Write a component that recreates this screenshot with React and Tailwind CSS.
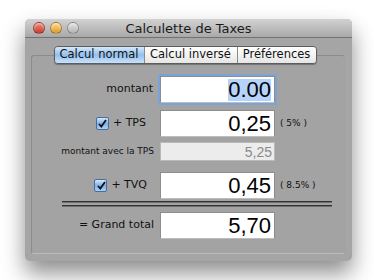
import React from "react";

const label = "font-['DejaVu_Sans',sans-serif] text-[#111]";
const num = "font-['Liberation_Sans',Arial,sans-serif]";

function Light({ color }) {
  return (
    <div
      className={`h-[12px] w-[12px] rounded-full border border-black/30 shadow-[inset_0_1px_2px_rgba(255,255,255,0.6)] ${color}`}
    />
  );
}

function Check() {
  return (
    <div className="flex h-[13px] w-[13px] items-center justify-center rounded-[2px] border border-[#4a6c9a] bg-gradient-to-b from-[#d6e8fb] via-[#7fb0e6] to-[#aad0f6]">
      <svg width="10" height="10" viewBox="0 0 10 10">
        <path d="M2 5 L4.3 7.6 L9 1" fill="none" stroke="#111" strokeWidth="1.8" />
      </svg>
    </div>
  );
}

function Field({ value, focus }) {
  return (
    <div
      className={`flex h-[27px] w-[115px] items-center justify-end border border-[#8d8d8d] border-b-[#bdbdbd] bg-white pr-[3px] ${
        focus ? "ring-2 ring-[#7aa3d8]" : ""
      }`}
    >
      <span
        className={`${num} text-[22px] leading-none text-black ${
          focus ? "bg-[#b6d4fb]" : ""
        }`}
      >
        {value}
      </span>
    </div>
  );
}

export default function App() {
  return (
    <div className="h-[280px] w-[374px] overflow-hidden bg-white pl-[25px] pt-[19px]">
      <div className="flex h-[242px] w-[327px] flex-col overflow-hidden rounded-[5px] bg-[#a5a5a5] shadow-[0_12px_22px_rgba(0,0,0,0.45)]">
        {/* title bar */}
        <div className="relative flex h-[19px] items-center border-b border-[#727272] bg-gradient-to-b from-[#d2d2d2] to-[#a9a9a9] pl-[8px]">
          <div className="flex gap-[5px]">
            <Light color="bg-gradient-to-b from-[#f08a7c] to-[#c8382a]" />
            <Light color="bg-gradient-to-b from-[#fbd98b] to-[#e39a1c]" />
            <Light color="bg-gradient-to-b from-[#e2e2e2] to-[#b4b4b4]" />
          </div>
          <div className="absolute inset-0 flex items-center justify-center pt-[1px] font-['DejaVu_Sans',sans-serif] text-[13px] text-[#1a1a1a]">
            Calculette de Taxes
          </div>
        </div>

        {/* tabs */}
        <div className="mt-[8px] flex justify-center pr-[7px]">
          <div className="z-10 flex h-[18px] overflow-hidden rounded-[4px] border border-[#5c5c5c] font-['DejaVu_Sans',sans-serif] text-[11.5px] text-[#111] shadow-[0_1px_1px_rgba(0,0,0,0.3)]">
            <div className="flex w-[89px] items-center justify-center bg-gradient-to-b from-[#d5e8fb] via-[#93c0ee] to-[#c8e2fb]">
              Calcul normal
            </div>
            <div className="flex w-[93px] items-center justify-center border-l border-[#8a8a8a] bg-gradient-to-b from-white to-[#e6e6e6]">
              Calcul inversé
            </div>
            <div className="flex w-[79px] items-center justify-center border-l border-[#8a8a8a] bg-gradient-to-b from-white to-[#e6e6e6]">
              Préférences
            </div>
          </div>
        </div>

        {/* group box */}
        <div className="-mt-[9px] ml-[6px] flex h-[199px] w-[314px] flex-col rounded-[3px] border border-[#8b8b8b] border-b-[#bcbcbc] border-r-[#a0a0a0] bg-[#a3a3a3] pt-[20px]">
          <div className="flex items-center">
            <div className={`w-[122px] pr-[1px] text-right text-[11px] ${label}`}>montant</div>
            <div className="ml-[6px]">
              <Field value="0.00" focus />
            </div>
          </div>

          <div className="mt-[7px] flex items-center">
            <div className="flex w-[122px] items-center justify-end gap-[4px] pr-[8px]">
              <Check />
              <span className={`text-[11px] ${label}`}>+ TPS</span>
            </div>
            <div className="ml-[6px]">
              <Field value="0,25" />
            </div>
            <span className={`ml-[5px] text-[9px] ${label}`}>( 5% )</span>
          </div>

          <div className="mt-[5px] flex items-center">
            <div className={`w-[122px] text-right text-[9px] ${label}`}>montant avec la TPS</div>
            <div className="ml-[6px] flex h-[19px] w-[115px] items-center justify-end border border-[#b9b9b9] bg-[#ececec] pr-[2px]">
              <span className={`${num} text-[14px] leading-none text-[#8a8a8a]`}>5,25</span>
            </div>
          </div>

          <div className="mt-[11px] flex items-center">
            <div className="flex w-[122px] items-center justify-end gap-[4px] pr-[7px]">
              <Check />
              <span className={`text-[11px] ${label}`}>+ TVQ</span>
            </div>
            <div className="ml-[6px]">
              <Field value="0,45" />
            </div>
            <span className={`ml-[5px] text-[9px] ${label}`}>( 8.5% )</span>
          </div>

          <div className="ml-[30px] mt-[2px] flex w-[270px] flex-col gap-[2px]">
            <div className="h-[2px] border-t border-[#333] bg-[#707070]" />
            <div className="h-[2px] border-t border-[#333] bg-[#707070]" />
          </div>

          <div className="mt-[5px] flex items-center">
            <div className={`w-[122px] text-right text-[11px] ${label}`}>= Grand total</div>
            <div className="ml-[6px]">
              <Field value="5,70" />
            </div>
          </div>
        </div>
      </div>
    </div>
  );
}
